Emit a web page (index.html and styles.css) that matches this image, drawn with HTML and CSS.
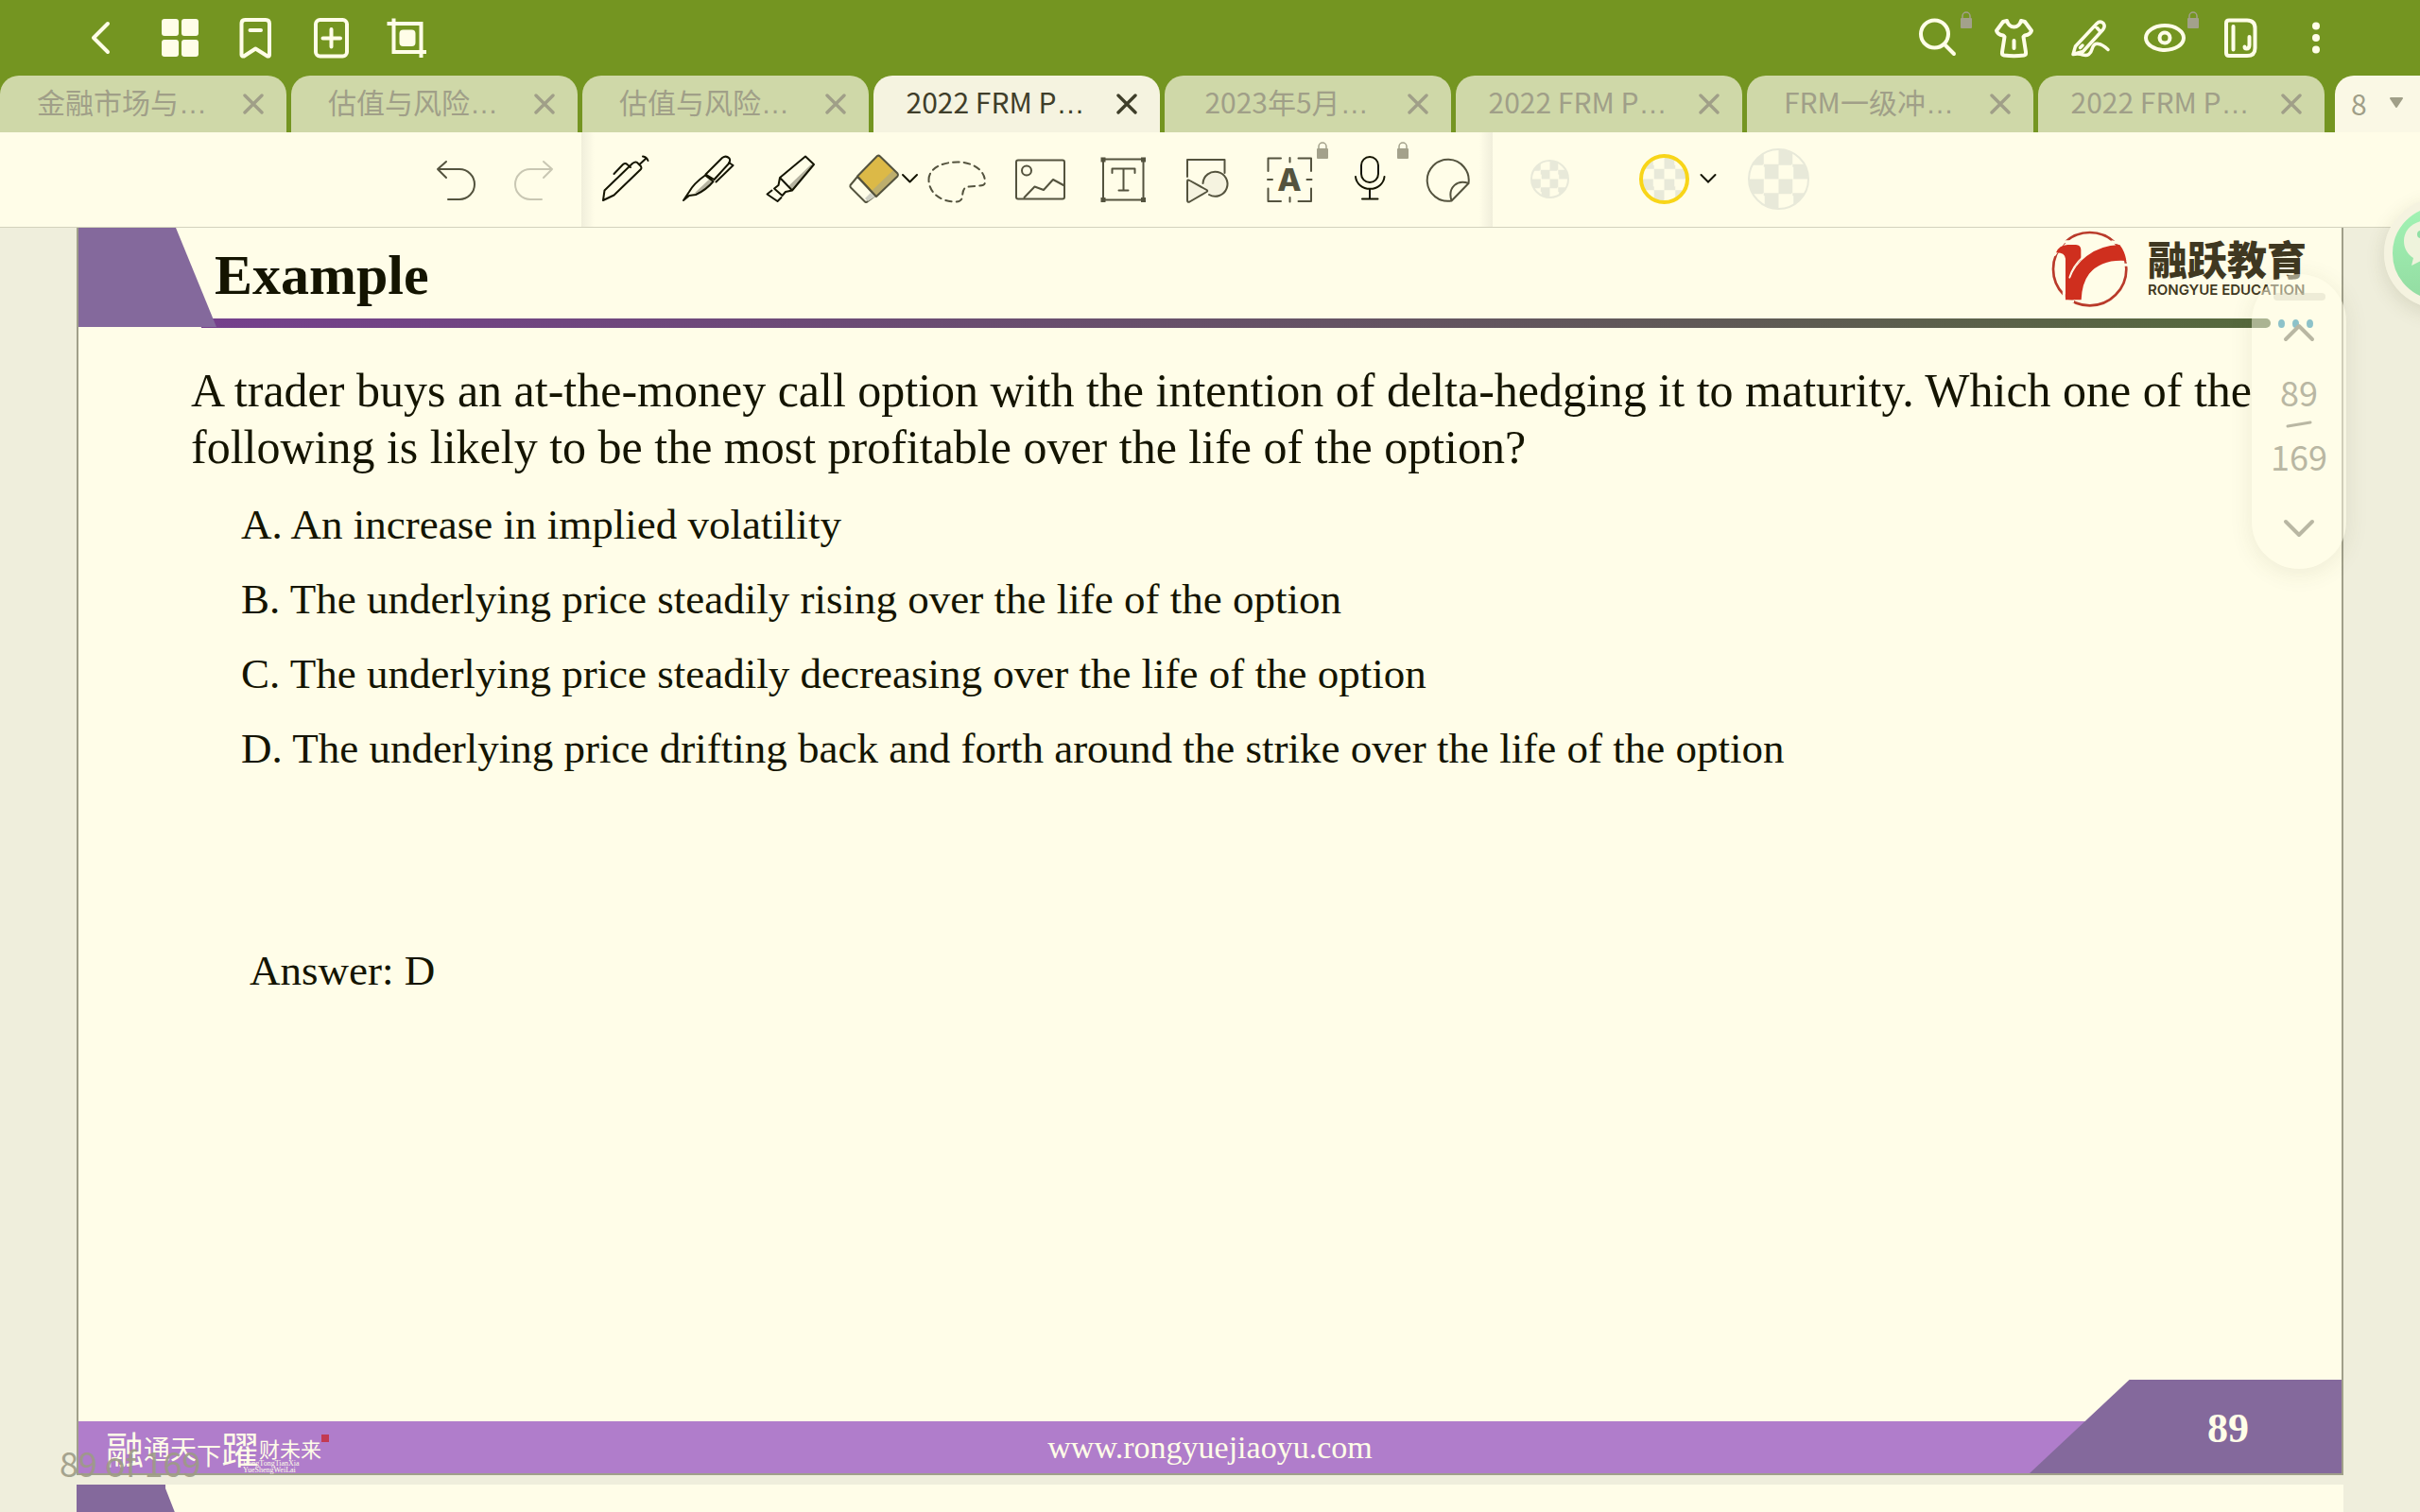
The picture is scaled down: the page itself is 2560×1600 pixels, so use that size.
FILE: index.html
```html
<!DOCTYPE html>
<html lang="zh-CN">
<head>
<meta charset="utf-8">
<title>2022 FRM P...</title>
<link rel="stylesheet" href="styles.css">
</head>
<body>
<svg class="defs" aria-hidden="true">
  <symbol id="lock" viewBox="0 0 12 18"><path d="M2 8V5a4 4 0 0 1 8 0v3" fill="none" stroke="currentColor" stroke-width="1.5"/><rect y="7" width="12" height="11" rx="1" fill="currentColor"/></symbol>
  <symbol id="close" viewBox="0 0 22 22"><path d="M2 2L20 20M20 2L2 20" fill="none" stroke="currentColor" stroke-width="3.4" stroke-linecap="round"/></symbol>
</svg>

<header class="topbar">
  <nav class="topbar-group">
    <button class="top-btn" aria-label="返回"><svg viewBox="0 0 48 48"><path d="M28 9L13 24L28 39"/></svg></button>
    <button class="top-btn" aria-label="缩略图"><svg class="solid" viewBox="0 0 48 48"><rect x="5" y="4" width="18" height="18" rx="3"/><rect x="26" y="4" width="18" height="18" rx="3"/><rect x="5" y="26" width="18" height="18" rx="3"/><rect x="26" y="26" width="18" height="18" rx="3"/></svg></button>
    <button class="top-btn" aria-label="书签"><svg viewBox="0 0 48 48"><path d="M9.500 9Q9.500 5 13.500 5H35Q39 5 39 9V42Q39 44 37 43.500L24.300 35.500L12 43.500Q9.500 44 9.500 42ZM18.500 16H30"/></svg></button>
    <button class="top-btn" aria-label="添加页面"><svg viewBox="0 0 48 48"><rect x="8" y="5" width="33" height="38.500" rx="4.500"/><path d="M24.500 15V33.500M15.500 24.500H34"/></svg></button>
    <button class="top-btn" aria-label="裁剪"><svg class="crop-icon" viewBox="0 0 48 48"><path d="M10.500 3.500V39H45M3.500 9H39.500V45"/><rect x="18.500" y="17.500" width="13" height="13.500" rx="2" class="fill"/></svg></button>
  </nav>
  <nav class="topbar-group">
    <button class="top-btn" aria-label="搜索"><svg viewBox="0 0 48 48"><circle cx="20.500" cy="20" r="14.500"/><path d="M31 31L41 41"/></svg><svg class="lock"><use href="#lock"/></svg></button>
    <button class="top-btn" aria-label="主题"><svg viewBox="0 0 48 48"><path d="M17 6Q19 12.500 24.500 12.500Q30 12.500 32 6L36 7L43 16.500Q42 20.500 36 21.500L34.500 23L37 39Q37.500 42 35 42.500Q24.500 44 14 42.500Q11.500 42 12 39L14.500 23L13 21.500Q7 20.500 6 16.500L13 7ZM24.500 27V35"/></svg></button>
    <button class="top-btn" aria-label="手写"><svg class="fine" viewBox="0 0 48 48"><path d="M7 41.500L9.500 33L32 9Q35.500 5.500 39 8.500Q41.500 12 38.500 15.500L17.500 38.500ZM31 12L35.500 17M14.500 34.500L17 32M7 41.500Q13 40.500 17.500 42Q25 44 27 36Q29 29 34 30.500Q38 31 44 36.500"/></svg></button>
    <button class="top-btn" aria-label="阅读模式"><svg viewBox="0 0 48 48"><ellipse cx="24" cy="24" rx="20" ry="13"/><circle cx="24" cy="24" r="5.500"/></svg><svg class="lock"><use href="#lock"/></svg></button>
    <button class="top-btn" aria-label="笔记本"><svg viewBox="0 0 48 48"><path d="M12 5.500H31Q39.500 5.500 39.500 14V35Q39.500 43 31 43H12Q9 43 9 40V8.500Q9 5.500 12 5.500ZM16.500 12V36.500M33.500 23V31.500Q33.500 35.500 30.500 35.500Q28.500 35.500 28.500 33.500"/></svg></button>
    <button class="top-btn" aria-label="更多"><svg class="solid" viewBox="0 0 48 48"><circle cx="24" cy="11.500" r="4"/><circle cx="24" cy="24" r="4"/><circle cx="24" cy="36.500" r="4"/></svg></button>
  </nav>
</header>

<div class="tabs">
  <div class="tab"><a class="tab-title" href="#">金融市场与<span class="dots">…</span></a><button class="tab-close" aria-label="关闭"><svg><use href="#close"/></svg></button></div>
  <div class="tab"><a class="tab-title" href="#">估值与风险<span class="dots">…</span></a><button class="tab-close" aria-label="关闭"><svg><use href="#close"/></svg></button></div>
  <div class="tab"><a class="tab-title" href="#">估值与风险<span class="dots">…</span></a><button class="tab-close" aria-label="关闭"><svg><use href="#close"/></svg></button></div>
  <div class="tab active"><a class="tab-title" href="#">2022 FRM P<span class="dots">…</span></a><button class="tab-close" aria-label="关闭"><svg><use href="#close"/></svg></button></div>
  <div class="tab"><a class="tab-title" href="#">2023年5月<span class="dots">…</span></a><button class="tab-close" aria-label="关闭"><svg><use href="#close"/></svg></button></div>
  <div class="tab"><a class="tab-title" href="#">2022 FRM P<span class="dots">…</span></a><button class="tab-close" aria-label="关闭"><svg><use href="#close"/></svg></button></div>
  <div class="tab"><a class="tab-title" href="#">FRM一级冲<span class="dots">…</span></a><button class="tab-close" aria-label="关闭"><svg><use href="#close"/></svg></button></div>
  <div class="tab"><a class="tab-title" href="#">2022 FRM P<span class="dots">…</span></a><button class="tab-close" aria-label="关闭"><svg><use href="#close"/></svg></button></div>
  <button class="tab-count">8<svg viewBox="0 0 16 12"><path d="M2 1H14L8 10Z" fill="currentColor" stroke="currentColor" stroke-width="2" stroke-linejoin="round"/></svg></button>
</div>

<div class="toolbar">
  <div class="history">
    <button class="tool" aria-label="撤销"><svg viewBox="0 0 64 64"><path d="M21 13L12 21L21 30M12 21H35A15.800 15.800 0 0 1 35 53H23"/></svg></button>
    <button class="tool" aria-label="重做" disabled><svg viewBox="0 0 64 64"><path d="M42 13L51 21L42 30M51 21H28A15.800 15.800 0 0 0 28 53H40"/></svg></button>
  </div>
  <div class="tools">
    <button class="tool wide ink" aria-label="圆珠笔"><svg viewBox="0 0 64 64"><path d="M9 54L10.500 43.500L40 15Q44 12 46 15L49 18Q50 20 49 21L20.500 48.500ZM20.500 26L30 16Q32.500 14 34.500 16L38 19M47.500 16L54 10M51 7.500Q55 8 56.500 12"/></svg></button>
    <button class="tool wide ink" aria-label="钢笔"><svg viewBox="0 0 64 64"><path class="shade" d="M17 47L33 32L36 34Q29 43 17 47ZM39 30L53 15L54 16L40 32Z"/><path d="M6 54L12 45Q17 36 29 27.500L37.500 34Q30 43 19 48L12 49ZM29.500 26.500L47 9Q51 6 54.500 9.500Q56 12 54 15L38.500 32ZM54 14L58.500 17L40.500 34.500"/></svg></button>
    <button class="tool wide ink" aria-label="荧光笔"><svg viewBox="0 0 64 64"><path class="shade" d="M29 39L53 16L55 17L33 43Z"/><path d="M20 30L47 7.500L56 16L33 43.500ZM20 30L18.500 38L14 41.500L22.500 49L26 45L33 43.500M11.500 43.500L6.500 47.500L17.500 55L21.500 51"/></svg></button>
    <button class="tool wide" aria-label="橡皮擦"><svg viewBox="0 0 64 64"><path class="rubber" d="M14 29L6.500 38Q6 39.500 7 40.500L22 55.500Q24 56.500 25 55L33 49Z"/><path class="rubber-shade" d="M28 46L33 50L25 55L22 52Z"/><path class="sleeve" d="M14 28.500L35 7Q36.500 6 38 7.500L56.500 25.500Q57.500 27 56.500 28.500L34 50Z"/><path class="sleeve-shade" d="M52 22L56.500 26V28L34 49L29 44Z"/><path d="M14 28.500L35 7Q36.500 6 38 7.500L56.500 25.500Q57.500 27 56.500 28.500L34 50Z"/><path class="ink-line" d="M62 27L69.500 34.500L77 27"/></svg></button>
    <button class="tool wide" aria-label="套索"><svg viewBox="0 0 64 64"><path stroke-dasharray="6.500 5" d="M1.500 32C1.500 20 16 13.500 32 13.500C48 13.500 61 22 61 34.500C61 38 58 38.500 54 38.500L44 39.500C38 40 37.500 44 37 50C36.500 54 34 55.500 30 55.500C14 55.500 1.500 46 1.500 32"/></svg></button>
    <button class="tool wide" aria-label="图片"><svg viewBox="0 0 64 64"><rect x="6" y="11.500" width="51" height="41" rx="2"/><circle cx="17" cy="22.500" r="5"/><path d="M14.500 51L25.500 39.500L35 43L45 32L57 38.500"/></svg></button>
    <button class="tool wide" aria-label="文本"><svg viewBox="0 0 64 64"><rect x="10" y="10.500" width="42.500" height="43"/><path class="corner" d="M7.500 8.500h5v5h-5zM50 8.500h5v5h-5zM7.500 51h5v5h-5zM50 51h5v5h-5z"/><path d="M19.500 25V20.500H43.500V25M31.500 20.500V43M26.500 43.500H36.500"/></svg></button>
    <button class="tool wide" aria-label="形状"><svg viewBox="0 0 64 64"><path d="M11 29V11H50.500V25"/><path class="pale" d="M27.500 36A13 13 0 1 1 34 48"/><path class="pale" d="M11 34Q11 31.500 13.500 33L31.500 43Q33 44 31.500 45L13.500 55.500Q11 56.500 11 54Z"/></svg></button>
    <button class="tool wide" aria-label="文字识别"><svg viewBox="0 0 64 64"><path d="M22 9.500H8.500V23M40.500 9.500H54V23M22 55H8.500V41.500M40.500 55H54V41.500M31.500 9V13.500M31.500 51V55.500M8 32H13M49.500 32H54.500"/><text x="31" y="44" text-anchor="middle">A</text></svg><svg class="lock"><use href="#lock"/></svg></button>
    <button class="tool ink" aria-label="录音"><svg viewBox="0 0 64 64"><rect x="22" y="8" width="18" height="27" rx="9"/><path d="M16 29A15.300 14 0 0 0 46.500 29M31 43V52.500M23 52.500H39.500"/></svg><svg class="lock"><use href="#lock"/></svg></button>
    <button class="tool" aria-label="贴纸"><svg viewBox="0 0 64 64"><path d="M53.500 36A22 22 0 1 0 35.500 54.500L53.500 36C42 31.500 31 40 35.500 54.500"/></svg></button>
  </div>
  <div class="swatches">
    <button class="swatch small" aria-label="细"></button>
    <span class="swatch-pick">
      <button class="swatch medium" aria-label="中"></button>
      <svg class="chevron" viewBox="0 0 18 12"><path d="M1.500 2L9 9.500L16.500 2"/></svg>
    </span>
    <button class="swatch large" aria-label="粗"></button>
  </div>
</div>

<main class="viewer">
  <article class="slide">
    <header class="slide-head">
      <svg class="corner-shape" viewBox="0 0 146 106"><path d="M0 0H103L146 105H0Z" fill="#84699c"/></svg>
      <div class="slide-row">
        <h1>Example</h1>
        <div class="logo">
          <svg viewBox="150 68 246 252"><circle cx="272" cy="193" r="116" fill="none" stroke="#b93a2a" stroke-width="8"/>
            <path d="M158 150L190 106H228M340 106L376 112L396 180H380M190 262V294L222 296" fill="none" stroke="#fffde8" stroke-width="9"/>
            <path d="M165 141Q174 117 202 116H228Q244 117 244 132V164Q220 185 206 222Q206 224 210 222Q225 180 262 152Q305 118 367 116Q384 138 388 167Q310 161 270 208Q247 238 245 291H195V160Q192 140 165 141Z" fill="#cf2f1e"/>
            <path d="M207 221Q218 182 250 154" fill="none" stroke="#fffde8" stroke-width="4"/></svg>
          <div class="logo-text"><strong>融跃教育</strong><span>RONGYUE EDUCATION</span></div>
        </div>
      </div>
      <div class="slide-rule"><i class="rule"></i><i class="dot"></i><i class="dot"></i><i class="dot"></i></div>
    </header>
    <section class="slide-body">
      <p class="question">A trader buys an at-the-money call option with the intention of delta-hedging it to maturity. Which one of the<br>following is likely to be the most profitable over the life of the option?</p>
      <ul class="options">
        <li>A. An increase in implied volatility</li>
        <li>B. The underlying price steadily rising over the life of the option</li>
        <li>C. The underlying price steadily decreasing over the life of the option</li>
        <li>D. The underlying price drifting back and forth around the strike over the life of the option</li>
      </ul>
      <p class="answer">Answer: D</p>
    </section>
    <footer class="slide-foot">
      <div class="motto">
        <span class="big">融</span><span class="mid">通天</span><span class="low">下</span><span class="big">躍</span><span>财未来</span><i class="seal"></i>
        <small>RongTongTianXia<br>YueShengWeiLai</small>
      </div>
      <a class="site" href="#">www.rongyuejiaoyu.com</a>
      <div class="page-badge">89</div>
    </footer>
  </article>
  <article class="slide next"><svg viewBox="0 0 146 106"><path d="M0 0H94V4L134 106H0Z" fill="#84699c"/></svg></article>

  <div class="page-label">89 of 169</div>
  <aside class="pager">
    <i class="grip"></i>
    <button aria-label="上一页"><svg viewBox="0 0 34 20"><path d="M3 17L17 3L31 17"/></svg></button>
    <span class="current">89</span>
    <svg class="slash" viewBox="0 0 28 8"><path d="M2 6L26 2"/></svg>
    <span class="total">169</span>
    <button class="down" aria-label="下一页"><svg viewBox="0 0 34 20"><path d="M3 3L17 17L31 3"/></svg></button>
  </aside>
</main>
<button class="chat" aria-label="微信"><svg viewBox="0 0 98 98"><path d="M39 14C22 14 12 24 12 36C12 44 16 50 22 54L20 62L30 57Q34 59 40 59C57 59 67 49 67 36C67 23 56 14 39 14Z" fill="#eef3dc"/><circle cx="30" cy="29" r="4" fill="#8fe0a4"/></svg></button>
</body>
</html>
```
FILE: styles.css
```css
* { box-sizing: border-box; }
body {
  margin: 0;
  height: 100vh;
  display: flex;
  flex-direction: column;
  position: relative;
  overflow: hidden;
  background: #efeedc;
  color: #141400;
  font-family: "Noto Sans CJK SC", "Noto Sans", sans-serif;
}
button {
  padding: 0;
  border: 0;
  background: none;
  color: inherit;
  font: inherit;
}
a { color: inherit; text-decoration: none; }
svg { display: block; overflow: visible; flex: none; }
.defs { position: absolute; width: 0; height: 0; }

/* Title bar */
.topbar {
  display: flex;
  justify-content: space-between;
  flex: none;
  height: 80px;
  padding: 0 70px;
  background: #749521;
}
.topbar-group { display: flex; }
.top-btn {
  position: relative;
  display: grid;
  place-items: center;
  width: 80px;
  height: 80px;
}
.top-btn > svg {
  width: 48px;
  height: 48px;
  fill: none;
  stroke: #fffde8;
  stroke-width: 4;
  stroke-linecap: round;
  stroke-linejoin: round;
}
.top-btn .crop-icon { stroke-linecap: butt; stroke-linejoin: miter; }
.top-btn .fine { stroke-width: 3.5; }
.top-btn .solid, .crop-icon .fill { fill: #fffde8; }
.top-btn .solid { stroke: none; }
.top-btn > .lock, .tool > .lock {
  position: absolute;
  left: calc(50% + 24px);
  top: 12px;
  width: 12px;
  height: 18px;
  color: #a3a18b;
  stroke: none;
}

/* Document tabs */
.tabs {
  display: flex;
  gap: 5px;
  flex: none;
  height: 60px;
  background: #749521;
}
.tab {
  display: flex;
  align-items: center;
  flex: 1;
  min-width: 0;
  padding: 0 13px 0 12px;
  border-radius: 20px 20px 0 0;
  background: #cfd8a8;
  color: #a09f88;
}
.tab.active { background: #f5f3e0; color: #3f3e2a; }
.tab-title {
  flex: 1;
  padding-bottom: 4px;
  font-size: 30px;
  line-height: 56px;
  text-align: center;
  white-space: nowrap;
  font-weight: 400;
}
.dots { font-family: "Liberation Sans", sans-serif; }
.tab-close {
  display: grid;
  place-items: center;
  width: 44px;
  height: 44px;
}
.tab-close svg { width: 22px; height: 22px; }
.tab-count {
  display: flex;
  align-items: center;
  gap: 23px;
  width: 90px;
  margin-left: 6px;
  padding: 0 0 2px 17px;
  border-radius: 20px 0 0 0;
  background: #faf8e5;
  color: #a09f88;
  font-size: 30px;
}
.tab-count svg { width: 16px; height: 12px; }

/* Annotation tools */
.toolbar {
  display: flex;
  flex: none;
  height: 101px;
  border-bottom: 1px solid #d3d2bd;
  background: #fffde8;
}
.history {
  display: flex;
  padding: 0 9px 0 442px;
}
.tools {
  display: flex;
  padding: 0 6px 0 2px;
  background:
    linear-gradient(to right, #f0eedb, #fffde8) left / 14px 100% no-repeat,
    linear-gradient(to left, #f0eedb, #fffde8) right / 14px 100% no-repeat;
}
.tool {
  position: relative;
  display: grid;
  place-items: center;
  width: 82px;
  height: 100px;
  color: #54533e;
}
.tool.wide { width: 88px; }
.tool.ink { color: #141400; }
.tool:disabled { color: #c9c7b3; }
.tool > svg {
  width: 64px;
  height: 64px;
  fill: none;
  stroke: currentColor;
  stroke-width: 2;
  stroke-linecap: round;
  stroke-linejoin: round;
}
.tool > .lock { left: calc(50% + 28px); top: 10px; }
.tool text {
  fill: currentColor;
  stroke: none;
  font: 800 33px Inter, sans-serif;
}
.tool .shade { fill: #b5b3a0; stroke: none; }
.tool .rubber { fill: #fffde8; }
.tool .rubber-shade { fill: #cfd0c4; stroke: none; }
.tool .sleeve { fill: #dcb947; stroke: none; }
.tool .sleeve-shade { fill: #bdae6d; stroke: none; }
.tool .ink-line { stroke: #141400; }
.tool .corner { fill: currentColor; stroke: none; }
.tool .pale { fill: #f5f3e0; }

.swatches {
  display: flex;
  align-items: center;
  padding: 0 0 2px 40px;
}
.swatch-pick {
  display: flex;
  align-items: center;
  gap: 11px;
  margin: 0 33px 0 74px;
}
.swatch {
  border: 2px solid #e8e9d9;
  border-radius: 50%;
  background: repeating-conic-gradient(#fffde8 0 25%, #e8e9d9 0 50%) 0 0 / 50% 50%;
}
.swatch.small { width: 41px; height: 41px; }
.swatch.medium { width: 53px; height: 53px; border: 4px solid #f8d518; }
.swatch.large { width: 65px; height: 65px; }
.chevron {
  width: 18px;
  height: 12px;
  fill: none;
  stroke: #141400;
  stroke-width: 2;
  stroke-linecap: round;
}

/* Page area */
.viewer {
  position: relative;
  display: flex;
  flex-direction: column;
  gap: 10px;
  flex: 1;
  min-height: 0;
  padding: 0 81px;
  overflow: hidden;
}
.slide {
  display: flex;
  flex-direction: column;
  flex: none;
  aspect-ratio: 2398 / 1320;
  border: 2px solid #a09f8a;
  border-top: 0;
  background: #fffde8;
  font-family: "Liberation Serif", "Noto Sans CJK SC", serif;
}
.slide.next { border: 0; }
.slide.next svg { width: 146px; height: 106px; }
.slide-head { position: relative; }
.corner-shape {
  position: absolute;
  left: 0;
  top: 0;
  width: 146px;
  height: 106px;
}
.slide-row {
  display: flex;
  justify-content: space-between;
  height: 96px;
  padding: 0 37px 0 144px;
}
h1 {
  margin: 0;
  font-size: 60px;
  line-height: 100px;
}
.logo { display: flex; gap: 20px; padding-top: 2px; }
.logo > svg { width: 82px; height: 84px; }
.logo-text {
  display: flex;
  flex-direction: column;
  gap: 6px;
  padding-top: 10px;
  color: #3f3821;
}
.logo-text strong {
  font: 900 42px/40px "Noto Sans CJK SC", sans-serif;
}
.logo-text span {
  font: 600 15px/16px Inter, sans-serif;
}
.slide-rule {
  display: flex;
  align-items: center;
  gap: 8px;
  height: 10px;
  padding-right: 30px;
}
.rule {
  flex: 1;
  height: 10px;
  margin-left: 130px;
  border-radius: 0 5px 5px 0;
  background: linear-gradient(to right, #75408c, #5f5a55 75%, #566a3c);
}
.dot {
  width: 7px;
  height: 9px;
  border-radius: 50%;
  background: #1a86aa;
}
.slide-body { flex: 1; }
.question {
  margin: 0;
  padding: 36px 0 0 119px;
  font-size: 50px;
  line-height: 60px;
  white-space: nowrap;
}
.options {
  margin: 13px 0 0;
  padding: 0 0 0 172px;
  list-style: none;
  font-size: 45px;
  line-height: 79px;
}
.answer {
  margin: 156px 0 0;
  padding-left: 181px;
  font-size: 45px;
  line-height: 79px;
}
.slide-foot {
  display: grid;
  grid-template-columns: 1fr auto 1fr;
  align-items: end;
  height: 99px;
  background: linear-gradient(#b07dcb, #b07dcb) bottom / 100% 55px no-repeat;
  color: #fffde8;
}
.motto {
  position: relative;
  display: flex;
  align-items: center;
  height: 55px;
  padding-left: 29px;
  font: 400 22px/44px "Noto Sans CJK SC", sans-serif;
}
.motto .big { font-size: 40px; }
.motto .mid { font-size: 28px; }
.motto .low { padding-top: 14px; font-size: 26px; }
.motto small {
  position: absolute;
  left: 174px;
  top: 41px;
  font: 8px/7px "Liberation Serif", serif;
}
.seal {
  width: 8px;
  height: 8px;
  margin-bottom: 20px;
  background: #c33a52;
}
.site { font-size: 34px; line-height: 55px; }
.page-badge {
  justify-self: end;
  width: 330px;
  height: 99px;
  padding-left: 90px;
  background: #84699c;
  clip-path: polygon(32% 0, 100% 0, 100% 100%, 0 100%);
  font-size: 44px;
  font-weight: bold;
  line-height: 103px;
  text-align: center;
}

/* Floating page controls */
.page-label {
  position: absolute;
  left: 63px;
  bottom: 27px;
  color: #9d9b86;
  opacity: 0.9;
  font-size: 36px;
  line-height: 52px;
}
.pager {
  position: absolute;
  right: 78px;
  top: 49px;
  display: flex;
  flex-direction: column;
  align-items: center;
  width: 100px;
  padding: 20px 0 33px;
  border-radius: 50px;
  background: rgba(255, 253, 232, 0.5);
  box-shadow: 0 4px 24px rgba(80, 80, 40, 0.1);
  color: #b9b7a3;
  font-size: 36px;
  line-height: 52px;
}
.grip {
  width: 55px;
  height: 8px;
  border-radius: 4px;
  background: rgba(200, 198, 175, 0.3);
}
.pager button { margin-top: 24px; }
.pager button svg { width: 34px; height: 20px; }
.pager svg {
  fill: none;
  stroke: #b9b7a3;
  stroke-width: 4;
  stroke-linecap: round;
  stroke-linejoin: round;
}
.pager .current { margin-top: 26px; }
.pager .slash { width: 28px; height: 8px; margin-top: 5px; stroke-width: 3; }
.pager .total { margin-top: 3px; }
.pager .down { margin-top: 41px; }
.chat {
  position: absolute;
  left: calc(100% - 38px);
  top: 210px;
  width: 116px;
  height: 116px;
  border: 9px solid #f5f3e0;
  border-radius: 50%;
  background: linear-gradient(#a2f3b4, #93dca2);
  box-shadow: 0 6px 20px rgba(80, 80, 40, 0.15);
}
.chat svg { width: 98px; height: 98px; }
```
